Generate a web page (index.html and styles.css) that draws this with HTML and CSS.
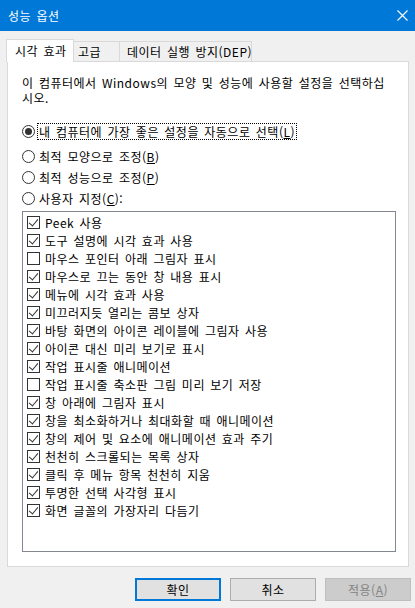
FILE: index.html
```html
<!DOCTYPE html>
<html lang="ko">
<head>
<meta charset="utf-8">
<title>성능 옵션</title>
<link rel="stylesheet" href="styles.css">
</head>
<body>
<div class="window">
  <div class="titlebar">
    <span class="title">성능 옵션</span>
    <svg class="close" width="11" height="11" viewBox="0 0 11 11"><path d="M0.5 0.5 L10.5 10.5 M10.5 0.5 L0.5 10.5" stroke="#fff" stroke-width="1.1" fill="none"/></svg>
  </div>
  <div class="content">
    <div class="tabs">
      <div class="tab active">시각 효과</div>
      <div class="tab t2">고급</div>
      <div class="tab t3">데이터 실행 방지(DEP)</div>
    </div>
    <div class="panel">
      <p class="desc">이 컴퓨터에서 Windows의 모양 및 성능에 사용할 설정을 선택하십<br>시오.</p>
      <div class="radios">
        <div class="radio-row first"><span class="radio checked"></span><span class="rlabel focus">내 컴퓨터에 가장 좋은 설정을 자동으로 선택(<u>L</u>)</span></div>
        <div class="radio-row"><span class="radio"></span><span class="rlabel">최적 모양으로 조정(<u>B</u>)</span></div>
        <div class="radio-row"><span class="radio"></span><span class="rlabel">최적 성능으로 조정(<u>P</u>)</span></div>
        <div class="radio-row"><span class="radio"></span><span class="rlabel">사용자 지정(<u>C</u>):</span></div>
      </div>
      <div class="listbox">
        <div class="item"><span class="cb on"></span><span>Peek 사용</span></div>
        <div class="item"><span class="cb on"></span><span>도구 설명에 시각 효과 사용</span></div>
        <div class="item"><span class="cb"></span><span>마우스 포인터 아래 그림자 표시</span></div>
        <div class="item"><span class="cb on"></span><span>마우스로 끄는 동안 창 내용 표시</span></div>
        <div class="item"><span class="cb on"></span><span>메뉴에 시각 효과 사용</span></div>
        <div class="item"><span class="cb on"></span><span>미끄러지듯 열리는 콤보 상자</span></div>
        <div class="item"><span class="cb on"></span><span>바탕 화면의 아이콘 레이블에 그림자 사용</span></div>
        <div class="item"><span class="cb on"></span><span>아이콘 대신 미리 보기로 표시</span></div>
        <div class="item"><span class="cb on"></span><span>작업 표시줄 애니메이션</span></div>
        <div class="item"><span class="cb"></span><span>작업 표시줄 축소판 그림 미리 보기 저장</span></div>
        <div class="item"><span class="cb on"></span><span>창 아래에 그림자 표시</span></div>
        <div class="item"><span class="cb on"></span><span>창을 최소화하거나 최대화할 때 애니메이션</span></div>
        <div class="item"><span class="cb on"></span><span>창의 제어 및 요소에 애니메이션 효과 주기</span></div>
        <div class="item"><span class="cb on"></span><span>천천히 스크롤되는 목록 상자</span></div>
        <div class="item"><span class="cb on"></span><span>클릭 후 메뉴 항목 천천히 지움</span></div>
        <div class="item"><span class="cb on"></span><span>투명한 선택 사각형 표시</span></div>
        <div class="item"><span class="cb on"></span><span>화면 글꼴의 가장자리 다듬기</span></div>
      </div>
    </div>
    <div class="buttons">
      <button class="btn default">확인</button>
      <button class="btn">취소</button>
      <button class="btn disabled">적용(<u>A</u>)</button>
    </div>
  </div>
</div>
</body>
</html>
```

FILE: styles.css
```css
* { box-sizing: border-box; }
html, body {
  margin: 0;
  padding: 0;
  background: #f0f0f0;
}
body {
  width: 415px;
  height: 608px;
  overflow: hidden;
  font-family: "Noto Sans CJK KR", "Noto Sans", sans-serif;
  font-size: 12px;
  letter-spacing: 0.5px;
  word-spacing: 1.5px;
  color: #000;
}
.window {
  width: 415px;
  height: 608px;
}
.titlebar {
  height: 31px;
  background: #0078d7;
  display: flex;
  align-items: center;
  justify-content: space-between;
  padding: 0 7px 0 8px;
}
.title {
  color: #fff;
  font-size: 12px;
  line-height: 16px;
}
.close { display: block; margin-top: -1px; }
.content {
  padding-top: 8px;
}
.tabs {
  display: flex;
  align-items: flex-end;
  height: 22px;
  margin-left: 6px;
}
.tab {
  height: 20px;
  line-height: 19px;
  background: #f0f0f0;
  border-top: 1px solid #d9d9d9;
  border-right: 1px solid #d9d9d9;
  white-space: nowrap;
}
.tab.active {
  position: relative;
  z-index: 1;
  width: 68px;
  height: 23px;
  margin-bottom: -1px;
  line-height: 21px;
  background: #fff;
  border-left: 1px solid #d9d9d9;
  padding-left: 8px;
}
.tab.t2 { width: 46px; padding-left: 4px; }
.tab.t3 { width: 132px; padding-left: 7px; }
.panel {
  margin-left: 7px;
  width: 402px;
  height: 506px;
  background: #fff;
  border: 1px solid #d9d9d9;
  padding: 0 12px 0 14px;
}
.desc {
  margin: 13px 0 0 0;
  line-height: 15px;
  white-space: nowrap;
}
.radios {
  margin-top: 18px;
  display: flex;
  flex-direction: column;
}
.radio-row {
  display: flex;
  align-items: center;
  height: 21px;
}
.radio-row.first {
  height: 17px;
  margin-bottom: 6px;
}
.radio {
  width: 13px;
  height: 13px;
  border: 1px solid #333;
  border-radius: 50%;
  background: #fff;
  display: flex;
  align-items: center;
  justify-content: center;
  margin-right: 2px;
  flex: none;
}
.radio.checked::after {
  content: "";
  width: 7px;
  height: 7px;
  border-radius: 50%;
  background: #333;
}
.rlabel {
  line-height: 15px;
  padding: 0 1px;
  border: 1px solid transparent;
  white-space: nowrap;
}
.rlabel.focus {
  border: 1px dotted #000;
}
.listbox {
  margin-top: 2px;
  width: 374px;
  height: 341px;
  border: 1px solid #828790;
  background: #fff;
  padding: 1px 0 0 4px;
}
.item {
  display: flex;
  align-items: center;
  height: 18px;
  white-space: nowrap;
}
.cb {
  width: 13px;
  height: 13px;
  border: 1px solid #333;
  background: #fff;
  margin-right: 5px;
  flex: none;
  position: relative;
}
.cb.on::after {
  content: "";
  position: absolute;
  left: 3px;
  top: 0px;
  width: 4px;
  height: 8px;
  border-right: 1.3px solid #333;
  border-bottom: 1.3px solid #333;
  transform: rotate(40deg);
  transform-origin: center;
}
.buttons {
  display: flex;
  justify-content: flex-end;
  gap: 9px;
  padding-right: 4px;
  margin-top: 11px;
}
.btn {
  width: 86px;
  height: 23px;
  padding: 0;
  font-family: "Noto Sans CJK KR", "Noto Sans", sans-serif;
  font-size: 12px;
  letter-spacing: 0.5px;
  line-height: 19px;
  color: #000;
  background: #e1e1e1;
  border: 1px solid #adadad;
}
.btn.default {
  border: 2px solid #0078d7;
}
.btn.disabled {
  background: #cccccc;
  border-color: #bfbfbf;
  color: #838383;
}
```
